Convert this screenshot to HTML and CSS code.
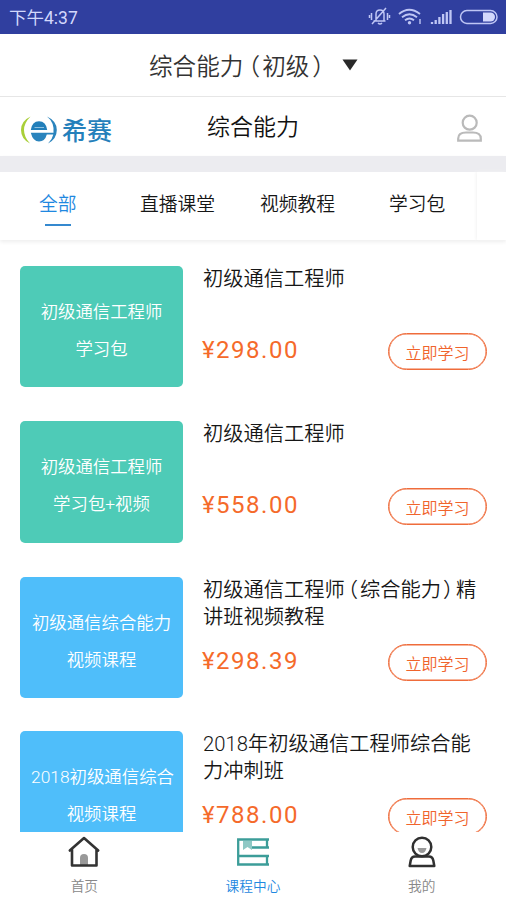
FILE: index.html
```html
<!DOCTYPE html>
<html lang="zh-CN">
<head>
<meta charset="utf-8">
<title>综合能力</title>
<link rel="stylesheet" href="styles.css">
</head>
<body>
<div class="screen">
  <div class="status">
    <span class="time">下午4:37</span>
    <svg class="status-icons" width="132" height="20" viewBox="0 0 132 20" fill="none" stroke="#bfc6f5" stroke-width="1.5">
      <path d="M6.500 14h12M9 14V7q0-4 4-4t4 4v7M11 16q2 2 4 0M4.500 6v7M2.500 8v3M20.500 6v7M22.500 8v3M5 17L19 1"/>
      <path d="M32 7q10-8.500 21 0M35 10.200q7.500-6 15 0M38 13.200q4.500-3.500 9 0" stroke-width="1.9"/>
      <circle cx="42.500" cy="15.700" r="1.700" fill="#bfc6f5" stroke="none"/>
      <path d="M53 12v5" stroke-width="1.4"/>
      <path d="M65 17v-2M68.700 17v-4M72.400 17v-7M76.100 17V7M79.800 17V5M83.500 17V3" stroke-width="2.3"/>
      <rect x="93.500" y="3.600" width="36.500" height="12.800" rx="6.400"/>
      <path d="M116 5.500h7.500a4.500 4.500 0 0 1 0 9H116z" fill="#d3d8fc" stroke="none"/>
    </svg>
  </div>
  <div class="picker">
    <span class="picker-name">综合能力<span class="open">（</span>初级<span class="close">）</span></span>
    <svg class="caret" width="16" height="12" viewBox="0 0 16 12"><path d="M.5.500h15L8 11.500z" fill="#292929"/></svg>
  </div>
  <header class="header">
    <div class="brand">
      <svg width="38" height="30" viewBox="0 0 38 30">
        <path d="M10.500 1.500Q1 6 1 15T10 28.500Q4 22 4 15T10.500 1.500z" fill="#a9cf38"/>
        <path d="M27 1.500Q36.800 6 36.800 15T28 28.500Q32.500 24 33.300 19.500H26.800Q25 26.500 19 26.500T10.800 17.700H33.500Q34.500 7.500 27 1.500z" fill="#2a84bd"/>
        <path d="M10.800 15Q12 6.300 19 6.300T27.200 15z" fill="#227fba"/>
        <path d="M14.500 12.500H24" stroke="#a9d0e8" stroke-width=".8"/>
      </svg>
      <span class="brand-name">希赛</span>
    </div>
    <h1>综合能力</h1>
    <svg class="user" width="28" height="30" viewBox="0 0 28 30" fill="none" stroke="#bababa" stroke-width="2.200">
      <circle cx="13.700" cy="8.700" r="7"/>
      <path d="M2.200 26.700V24.500Q2.200 18.500 10 18.500H17Q24.800 18.500 24.800 24.500V26.700z"/>
    </svg>
  </header>
  <nav class="tabs">
    <a class="tab on">全部</a>
    <a class="tab">直播课堂</a>
    <a class="tab">视频教程</a>
    <a class="tab">学习包</a>
    <span class="tab-more"></span>
  </nav>
  <main class="list">
    <article class="item">
      <div class="thumb green"><p>初级通信工程师</p><p>学习包</p></div>
      <div class="info">
        <h2>初级通信工程师</h2>
        <div class="buy"><span class="price">¥298.00</span><span class="btn">立即学习</span></div>
      </div>
    </article>
    <article class="item">
      <div class="thumb green"><p>初级通信工程师</p><p>学习包+视频</p></div>
      <div class="info">
        <h2>初级通信工程师</h2>
        <div class="buy"><span class="price">¥558.00</span><span class="btn">立即学习</span></div>
      </div>
    </article>
    <article class="item">
      <div class="thumb blue"><p>初级通信综合能力</p><p>视频课程</p></div>
      <div class="info">
        <h2>初级通信工程师<span class="open">（</span>综合能力<span class="close">）</span>精<br>讲班视频教程</h2>
        <div class="buy"><span class="price">¥298.39</span><span class="btn">立即学习</span></div>
      </div>
    </article>
    <article class="item">
      <div class="thumb blue"><p>2018初级通信综合</p><p>视频课程</p></div>
      <div class="info">
        <h2>2018年初级通信工程师综合能<br>力冲刺班</h2>
        <div class="buy"><span class="price">¥788.00</span><span class="btn">立即学习</span></div>
      </div>
    </article>
  </main>
  <footer class="bottom">
    <a class="dest">
      <svg width="34" height="34" viewBox="0 0 34 34" fill="none" stroke="#333" stroke-width="2.600" stroke-linejoin="round" stroke-linecap="round">
        <path d="M13 30.500V23q0-4 4-4t4 4v7.500z" fill="#999" stroke="none"/>
        <path d="M2.800 15.500L17 3l14.200 12.500M5 14.500v16h24.500v-16"/>
      </svg>
      <span>首页</span>
    </a>
    <a class="dest on">
      <svg width="34" height="34" viewBox="0 0 34 34" fill="none" stroke="#3c9d99" stroke-width="2.300">
        <path d="M33 4.500H2.200v25H33M2.200 21H33M15.500 12.500H33M31 3.500v9M31 20v9.500"/>
        <path d="M7 6h9v9l-4.500-3L7 15z" fill="#8fc8c5" stroke="none"/>
      </svg>
      <span>课程中心</span>
    </a>
    <a class="dest">
      <svg width="34" height="34" viewBox="0 0 34 34" fill="none" stroke="#303030" stroke-width="2.500" stroke-linejoin="round">
        <path d="M12.500 13h9q-1 5-4.500 5t-4.500-5z" fill="#999" stroke="none"/>
        <circle cx="17" cy="12" r="9.300"/>
        <path d="M10 21.500H24q3.500 0 4.300 4l1 5.500H4.700l1-5.500q.8-4 4.300-4z"/>
      </svg>
      <span>我的</span>
    </a>
  </footer>
</div>
</body>
</html>
```
FILE: styles.css
```css
* { box-sizing: border-box; margin: 0; padding: 0; }
body {
  background: #fff;
  color: #161616;
  font-family: "Noto Sans CJK SC", sans-serif;
  font-weight: 350;
}
h1, h2 { font-weight: 350; }
.screen { width: 506px; height: 900px; display: flex; flex-direction: column; overflow: hidden; }
.status {
  height: 34px; flex: none; display: flex; align-items: center; justify-content: space-between;
  padding: 0 7px 0 9px; background: #303f9f; color: #d3d8fc; font-size: 17px;
}
.time { font-family: Roboto, "Noto Sans CJK SC", sans-serif; font-weight: 400; font-size: 17.500px; line-height: 36px; padding-top: 1px; }
.picker {
  height: 63px; flex: none; display: flex; align-items: center; padding-left: 149px;
  border-bottom: 1px solid #e6e6e6; color: #333; font-size: 23.600px;
}
.picker-name { width: 193px; white-space: nowrap; }
.open, .close { font-feature-settings: "halt"; }
.picker .open { margin: 0 2px 0 5px; }
.picker .close { margin-left: 3px; }
.header { height: 59px; flex: none; display: grid; grid-template-columns: 207px 1fr 50px; align-items: center; }
.brand { display: flex; align-items: center; padding: 6px 0 0 20px; gap: 4px; }
.brand-name { color: #2480bb; font-size: 25px; font-weight: 500; line-height: 30px; margin-top: -2px; }
.header h1 { font-size: 23px; color: #111; line-height: 56px; margin-top: -4px; }
.user { margin-top: 5px; }
.tabs {
  height: 84px; flex: none; display: flex; padding-left: 39px; border-top: 16px solid #ececf0;
  font-size: 18.800px; line-height: 28px; box-shadow: 0 2px 4px #eee;
}
.tab { padding-top: 17px; width: 120px; }
.tab:first-child { width: 101px; }
.tab:nth-child(3) { width: 129px; }
.tab:nth-child(4) { width: 88px; }
.tab-more { flex: 1; box-shadow: -1px 0 3px #f3f3f3; }
.tab.on { color: #1f88e0; }
.tab.on::after { content: ""; display: block; width: 26px; height: 1.500px; margin: 7px 0 0 6px; background: #3589cf; }
.list { flex: 1; min-height: 0; overflow: hidden; padding: 26px 19px 0 20px; }
.item { height: 155px; display: flex; gap: 20px; }
.item:nth-child(2) { height: 156px; }
.item:nth-child(3) { height: 154px; }
.thumb {
  width: 163px; height: 121px; flex: none; border-radius: 5px; padding: 28px 11px 0;
  color: #fff; font-family: Roboto, "Noto Sans CJK SC", sans-serif; font-size: 17.400px; line-height: 36.500px; text-align: center;
}
.item:nth-child(2) .thumb { height: 122px; }
.thumb p { white-space: nowrap; }
.green { background: #4ecbb7; }
.blue { background: #4fbefa; }
.info { flex: 1; height: 121px; display: flex; flex-direction: column; }
h2 { height: 67px; font-family: Roboto, "Noto Sans CJK SC", sans-serif; font-size: 20.250px; line-height: 27px; white-space: nowrap; }
h2 .open, h2 .close { font-family: "Noto Sans CJK SC", sans-serif; line-height: 1; }
h2 .open { margin: 0 2px 0 3px; }
h2 .close { margin: 0 3px 0 2px; }
.buy { display: flex; justify-content: space-between; }
.price { font-family: Roboto, sans-serif; font-weight: 400; font-size: 24px; letter-spacing: 1.500px; line-height: 35px; color: #f56a2a; margin-left: -1px; }
.btn {
  width: 99px; height: 37px; border: 1.500px solid #ef6c3b; border-radius: 19px;
  box-shadow: inset 0 0 0 .5px #ef6c3b;
  color: #f0642c; font-size: 16px; line-height: 36px; text-align: center;
}
.bottom { height: 68px; flex: none; display: grid; grid-template-columns: repeat(3, 1fr); background: #fff; }
.dest { display: flex; flex-direction: column; align-items: center; padding-top: 3px; color: #888; font-size: 13.700px; line-height: 20px; }
.dest span { margin-top: 6px; }
.dest.on { color: #1f88e0; }
```
